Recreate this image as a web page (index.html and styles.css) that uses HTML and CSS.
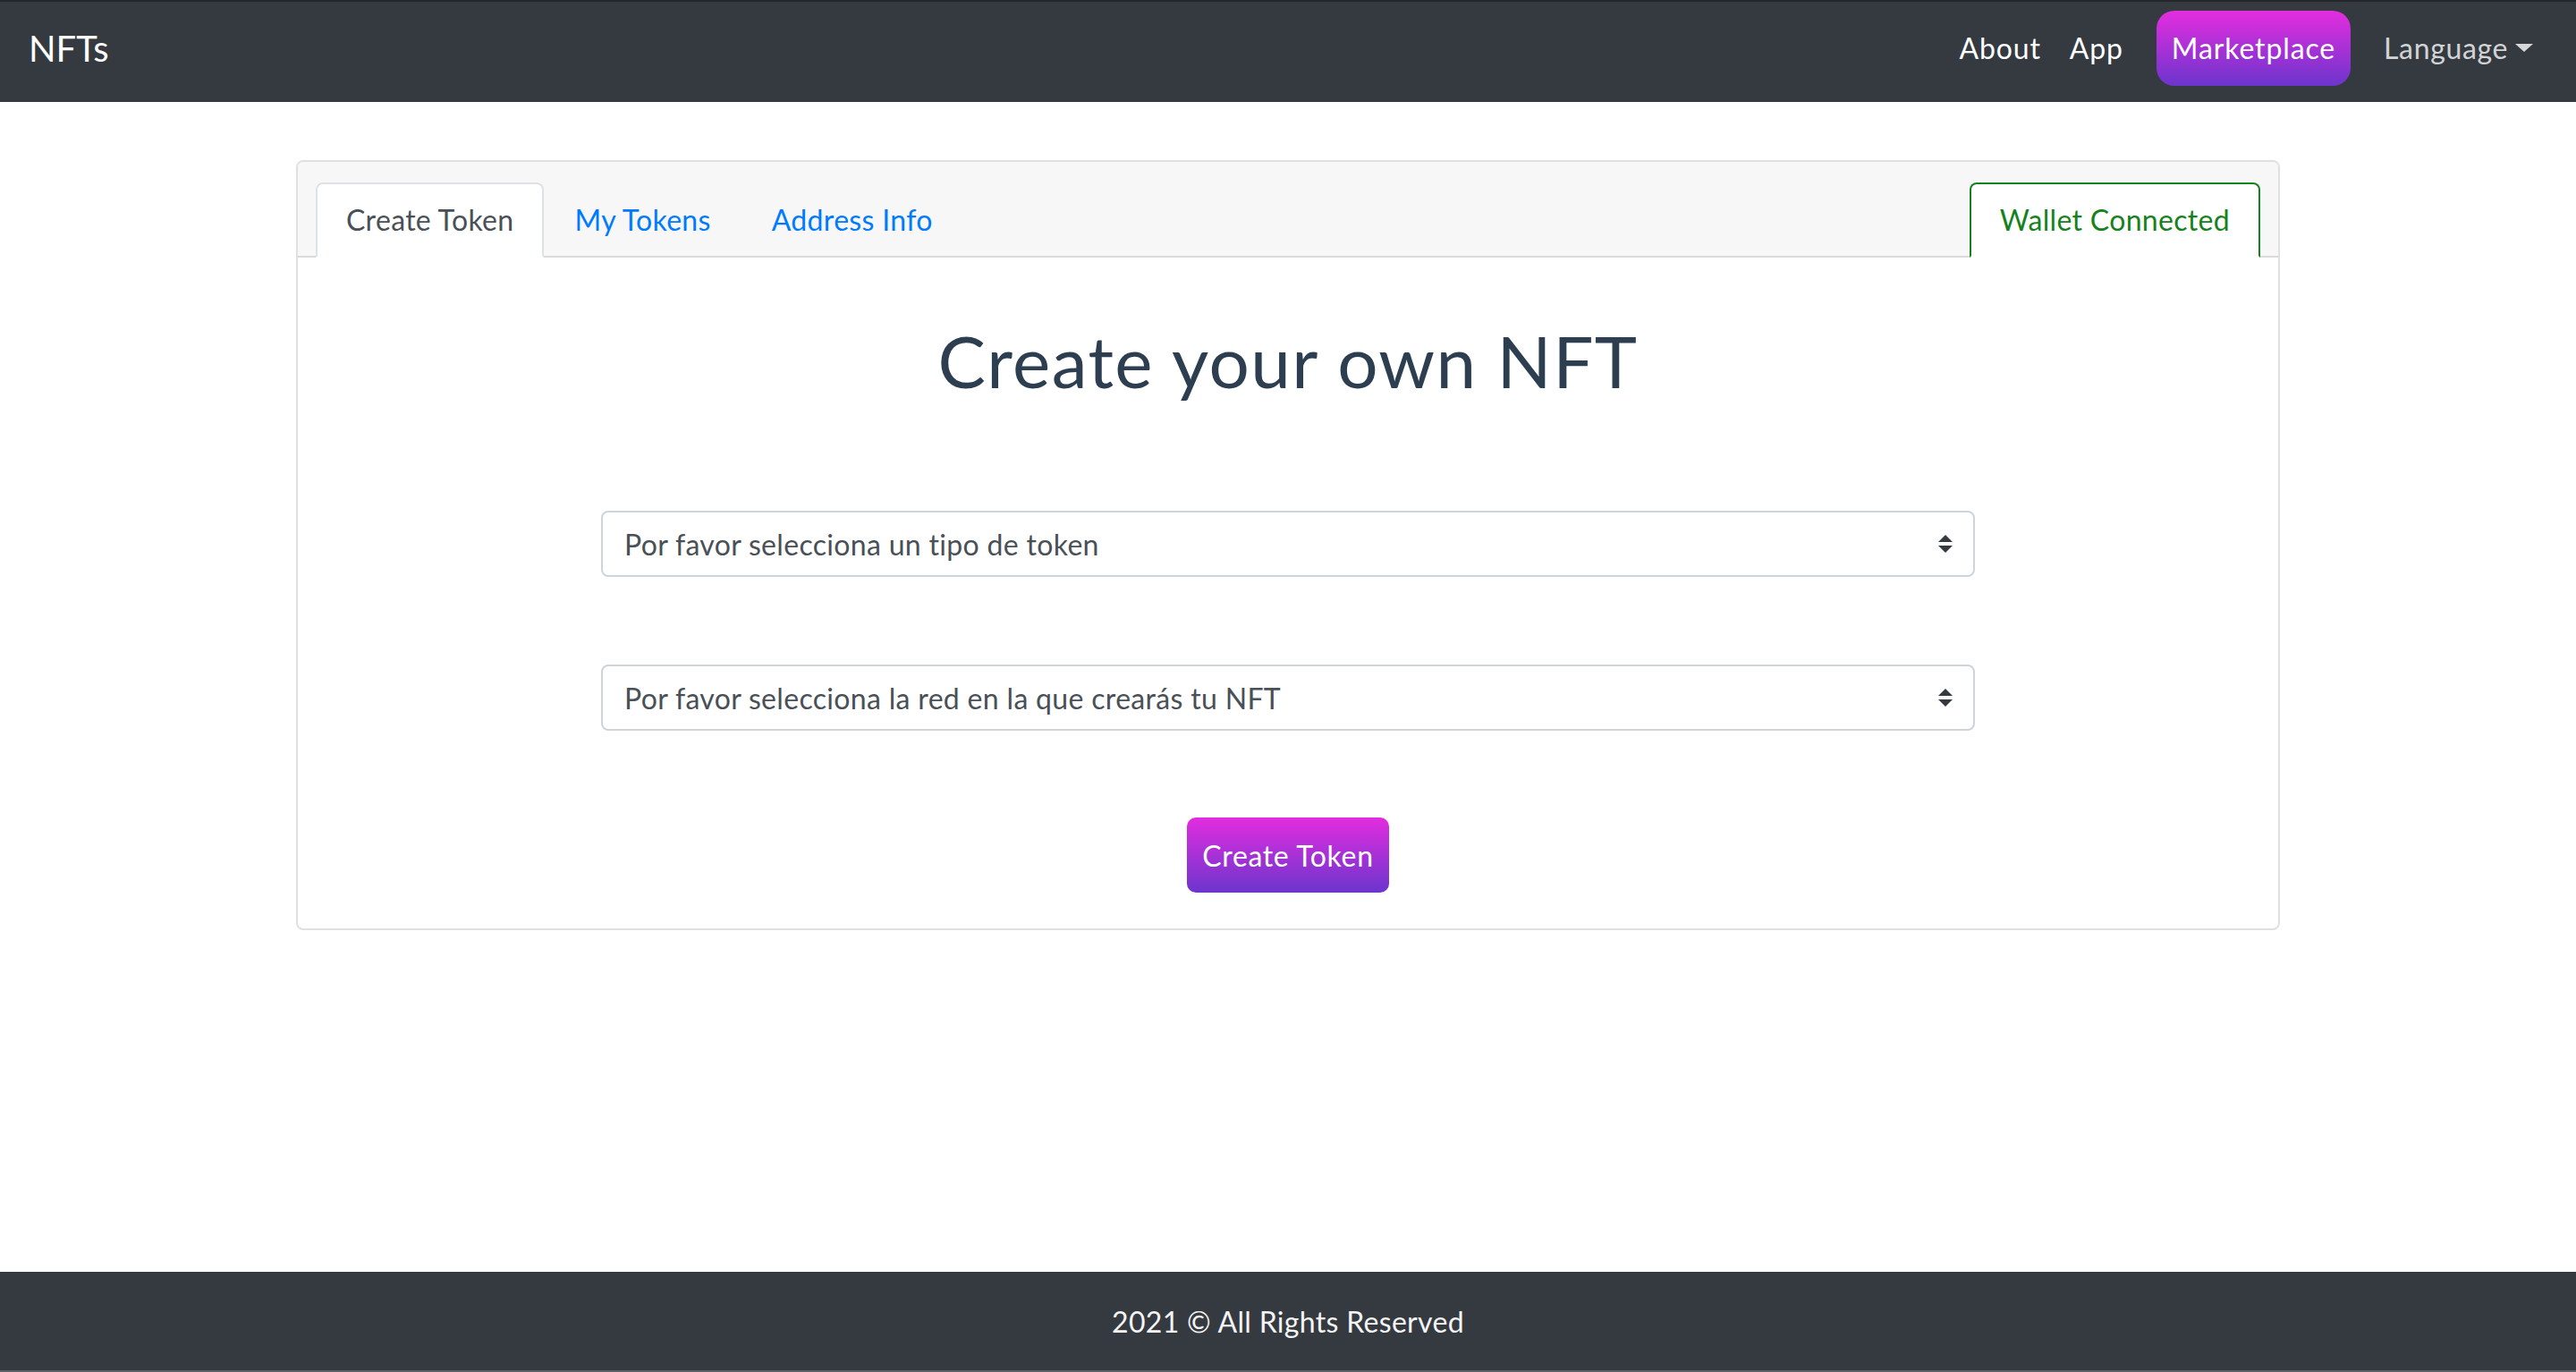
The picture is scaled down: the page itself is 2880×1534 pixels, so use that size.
FILE: index.html
```html
<!DOCTYPE html>
<html lang="es">
<head>
<meta charset="utf-8">
<title>NFTs</title>
<link rel="stylesheet" href="styles.css">
</head>
<body>
<div class="page">
  <nav class="navbar">
    <a class="brand" href="#">NFTs</a>
    <ul class="nav-links">
      <li><a class="nav-link" href="#">About</a></li>
      <li><a class="nav-link" href="#">App</a></li>
      <li><a class="nav-link market" href="#">Marketplace</a></li>
      <li><a class="nav-link lang" href="#">Language</a></li>
    </ul>
  </nav>

  <main class="container">
    <div class="card">
      <div class="card-header">
        <ul class="tabs">
          <li class="tab active">Create Token</li>
          <li class="tab">My Tokens</li>
          <li class="tab">Address Info</li>
          <li class="tab wallet">Wallet Connected</li>
        </ul>
      </div>
      <div class="card-body">
        <h1 class="title">Create your own NFT</h1>
        <div class="select-wrap">
          <select class="select">
            <option>Por favor selecciona un tipo de token</option>
          </select>
          <svg class="select-arrow" viewBox="0 0 4 5" width="16" height="20"><path d="M2 0L0 2h4zm0 5L0 3h4z" fill="#343a40"/></svg>
        </div>
        <div class="select-wrap second">
          <select class="select">
            <option>Por favor selecciona la red en la que crearás tu NFT</option>
          </select>
          <svg class="select-arrow" viewBox="0 0 4 5" width="16" height="20"><path d="M2 0L0 2h4zm0 5L0 3h4z" fill="#343a40"/></svg>
        </div>
        <div class="actions">
          <button class="btn-create" type="button">Create Token</button>
        </div>
      </div>
    </div>
  </main>

  <footer class="footer">2021 © All Rights Reserved</footer>
</div>
</body>
</html>
```

FILE: styles.css
```css
html, body {
  margin: 0;
  padding: 0;
}

body {
  font-family: Lato, "Open Sans", sans-serif;
  letter-spacing: 0.02em;
  background: #ffffff;
}

.page {
  min-height: 100vh;
  box-sizing: border-box;
  display: flex;
  flex-direction: column;
  border-top: 2px solid #25272b;
  border-bottom: 2px solid #5d6166;
}

/* ---------- navbar ---------- */
.navbar {
  background: #343a40;
  height: 112px;
  box-sizing: border-box;
  padding: 10px 32px 18px 32px;
  display: flex;
  align-items: center;
  justify-content: space-between;
}

.brand {
  font-size: 40px;
  line-height: 60px;
  color: #ffffff;
  text-decoration: none;
  letter-spacing: 0;
}

.nav-links {
  list-style: none;
  margin: 0;
  padding: 0;
  display: flex;
  align-items: center;
}

.nav-link {
  display: block;
  font-size: 32px;
  line-height: 48px;
  padding: 0 16px;
  color: #ffffff;
  text-decoration: none;
  letter-spacing: 0.027em;
}

.market {
  background: linear-gradient(to bottom, #e42ddf, #6c35cd);
  border-radius: 20px;
  padding: 18px 17px;
  margin: 0 21px;
}

.lang {
  color: rgba(255, 255, 255, 0.8);
  letter-spacing: 0.02em;
}

.lang::after {
  content: "";
  display: inline-block;
  margin-left: 8px;
  vertical-align: 8px;
  border-top: 9px solid;
  border-left: 10px solid transparent;
  border-right: 10px solid transparent;
}

/* ---------- card ---------- */
.container {
  width: 2218px;
  margin: 65px auto 0;
}

.card {
  border: 2px solid #e0e0e0;
  border-radius: 8px;
  background: #ffffff;
}

.card-header {
  background: #f7f7f7;
  border-bottom: 2px solid #dadada;
  border-radius: 6px 6px 0 0;
  padding: 23px 20px 0;
}

.tabs {
  list-style: none;
  margin: 0 0 -2px;
  padding: 0;
  display: flex;
}

.tab {
  font-size: 32px;
  line-height: 48px;
  padding: 16px 32px;
  border: 2px solid transparent;
  border-radius: 8px 8px 0 0;
  color: #007bff;
}

.tab.active {
  background: #ffffff;
  color: #495057;
  border-color: #dee2e6 #dee2e6 #ffffff;
}

.tab.wallet {
  margin-left: auto;
  background: #ffffff;
  color: #15821d;
  border-color: #15821d #15821d transparent;
}

.card-body {
  padding: 40px 40px 40px;
}

.title {
  margin: 27px 0 120px;
  font-size: 80px;
  line-height: 96px;
  font-weight: 400;
  color: #2c3e50;
  text-align: center;
  letter-spacing: 0.018em;
}

.select-wrap {
  position: relative;
  width: 1536px;
  margin: 0 auto;
}

.select-wrap.second {
  margin-top: 98px;
}

.select {
  display: block;
  width: 100%;
  height: 74px;
  box-sizing: border-box;
  padding: 0 64px 0 24px;
  font-family: Lato, "Open Sans", sans-serif;
  letter-spacing: 0.01em;
  font-size: 32px;
  color: #495057;
  background: #ffffff;
  border: 2px solid #ced4da;
  border-radius: 8px;
  appearance: none;
  -webkit-appearance: none;
  outline: none;
}

.select-arrow {
  position: absolute;
  right: 25px;
  top: 27px;
  pointer-events: none;
}

.actions {
  display: flex;
  justify-content: center;
  margin-top: 97px;
}

.btn-create {
  height: 84px;
  padding: 0 17px;
  border: none;
  border-radius: 10px;
  background: linear-gradient(to bottom, #e22ddf, #6c35cd);
  color: #ffffff;
  font-family: Lato, "Open Sans", sans-serif;
  letter-spacing: 0.02em;
  font-size: 32px;
  cursor: pointer;
}

/* ---------- footer ---------- */
.footer {
  margin-top: auto;
  height: 110px;
  background: #343a40;
  color: #f4f4f4;
  font-size: 32px;
  display: flex;
  align-items: center;
  justify-content: center;
}
```
